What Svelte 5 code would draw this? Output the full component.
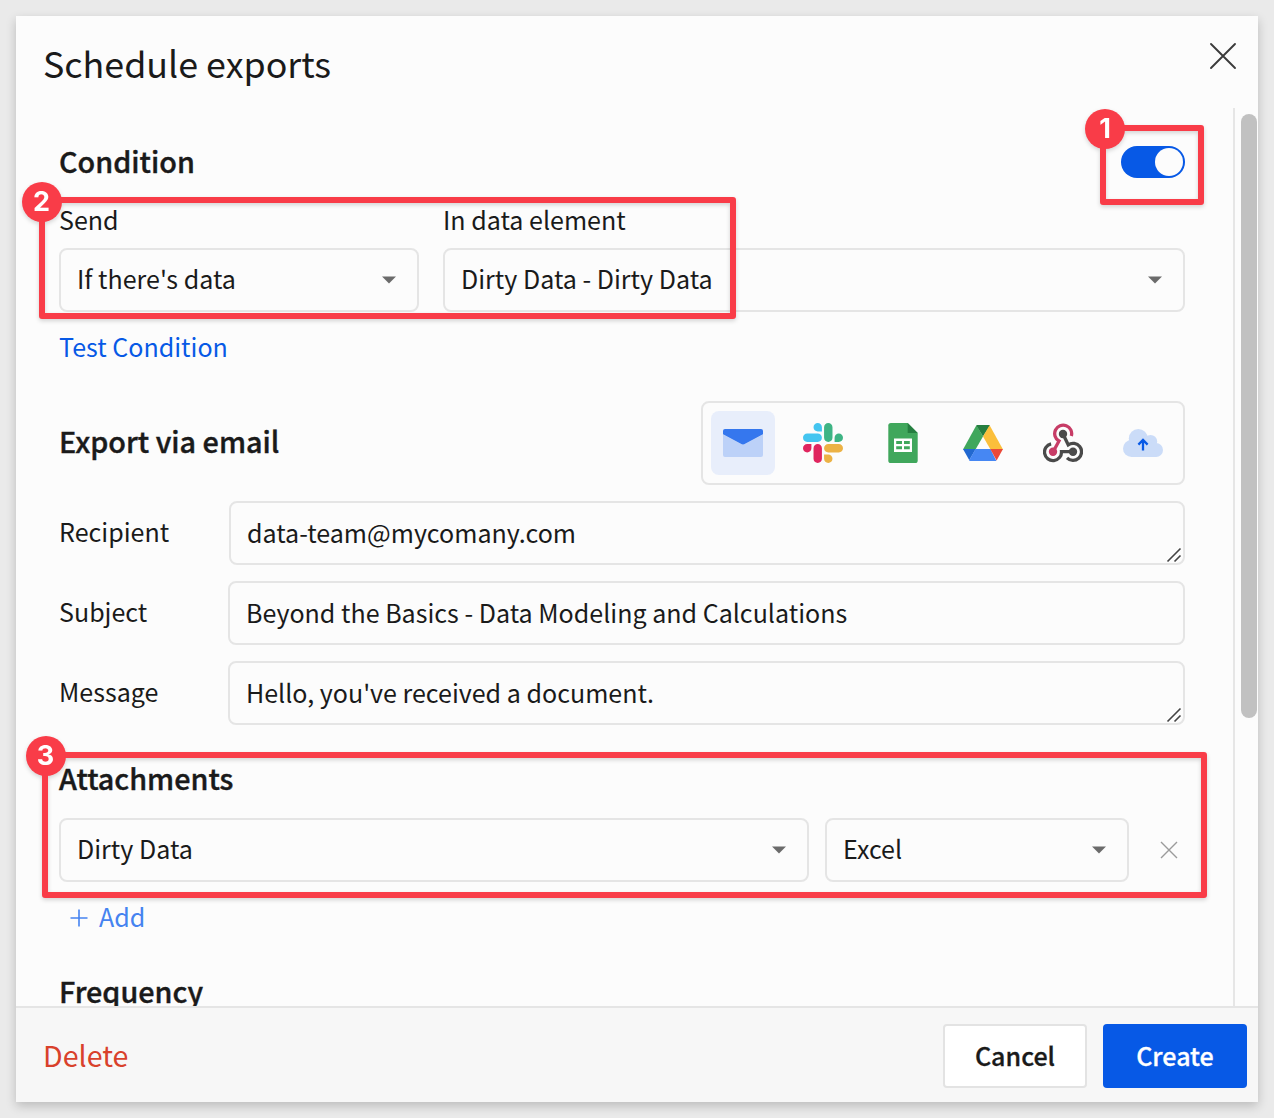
<script>
  let enabled = $state(true);
  let channel = $state('email');

  const channels = ['email', 'slack', 'sheets', 'drive', 'webhook', 'cloud'];
  const fields = [
    { label: 'Recipient', value: 'data-team@mycomany.com', resizable: true },
    { label: 'Subject', value: 'Beyond the Basics - Data Modeling and Calculations', resizable: false },
    { label: 'Message', value: "Hello, you've received a document.", resizable: true }
  ];
</script>

{#snippet select(text, cls)}
  <button class="select {cls}">
    <span>{text}</span>
    <svg class="caret" width="14" height="8" viewBox="0 0 14 8"><path d="M0 .4h14L7 7.6z" fill="#6b6b6b" /></svg>
  </button>
{/snippet}

{#snippet icon(name)}
  <svg width="40" height="40" viewBox="0 0 40 40">
    {#if name === 'email'}
      <path d="M0 11.4 20 22l20-10.6V32a2 2 0 0 1-2 2H2a2 2 0 0 1-2-2z" fill="#bcd1f8" />
      <path d="M2 6h36a2 2 0 0 1 2 2v3.3L21.2 21.2a2.6 2.6 0 0 1-2.4 0L0 11.3V8a2 2 0 0 1 2-2z" fill="#3577ee" />
    {:else if name === 'slack'}
      <g transform="scale(.32573)">
        <path fill="#e0265f" d="M25.8 77.6c0 7.1-5.8 12.9-12.9 12.9S0 84.7 0 77.6s5.8-12.9 12.9-12.9h12.9v12.9zm6.5 0c0-7.1 5.8-12.9 12.9-12.9s12.9 5.8 12.9 12.9v32.3c0 7.1-5.8 12.9-12.9 12.9s-12.9-5.8-12.9-12.9V77.6z" />
        <path fill="#44c5f0" d="M45.2 25.8c-7.1 0-12.9-5.8-12.9-12.9S38.1 0 45.2 0s12.9 5.8 12.9 12.9v12.9H45.2zm0 6.5c7.1 0 12.9 5.8 12.9 12.9s-5.8 12.9-12.9 12.9H12.9C5.8 58.1 0 52.3 0 45.2s5.8-12.9 12.9-12.9h32.3z" />
        <path fill="#3eb484" d="M97 45.2c0-7.1 5.8-12.9 12.9-12.9s12.9 5.8 12.9 12.9-5.8 12.9-12.9 12.9H97V45.2zm-6.5 0c0 7.1-5.8 12.9-12.9 12.9s-12.9-5.8-12.9-12.9V12.9C64.7 5.8 70.5 0 77.6 0s12.9 5.8 12.9 12.9v32.3z" />
        <path fill="#ecb245" d="M77.6 97c7.1 0 12.9 5.8 12.9 12.9s-5.8 12.9-12.9 12.9-12.9-5.8-12.9-12.9V97h12.9zm0-6.5c-7.1 0-12.9-5.8-12.9-12.9s5.8-12.9 12.9-12.9h32.3c7.1 0 12.9 5.8 12.9 12.9s-5.8 12.9-12.9 12.9H77.6z" />
      </g>
    {:else if name === 'sheets'}
      <path d="M7.9 0h16.8l10 10v27.4a2.6 2.6 0 0 1-2.6 2.6H7.9a2.6 2.6 0 0 1-2.6-2.6V2.6A2.6 2.6 0 0 1 7.9 0z" fill="#40a75c" />
      <path d="M24.7 0l10 10h-10z" fill="#257e40" />
      <path fill-rule="evenodd" d="M11 15.5h18V29H11zm2.2 2.5v3h5.8v-3zm7.8 0v3h5.8v-3zm-7.8 5.3v3H19v-3zm7.8 0v3h5.8v-3z" fill="#fff" />
    {:else if name === 'drive'}
      <path d="M13.4 2.2 20 13.5 12.5 26.4H0z" fill="#40a75c" />
      <path d="M14 2h12l1 .4L20 13.5 13.3 2.4z" fill="#257e40" />
      <path d="M26.6 2.2 40 26.4H27.5L20 13.5z" fill="#fbbf3b" />
      <path d="M0 26.1h12.7L6.3 37.3z" fill="#2168d0" />
      <path d="M12.5 26.1h15L33.4 38H6.6l-.4-.7z" fill="#4687f3" />
      <path d="M27.3 26.1H40l-6.4 11.5z" fill="#ea4939" />
    {:else if name === 'webhook'}
      <g fill="none" stroke-width="3.3">
        <path d="M28.3 13.1A8.5 8.5 0 1 0 16 18L10 29" stroke="#c73c66" />
        <path d="M8.1 20.8A8.5 8.5 0 1 0 18.5 28.6H30" stroke="#4a4a4a" />
        <path d="M24 34.8A8.5 8.5 0 1 0 25.2 21.8L20 11" stroke="#4a4a4a" />
      </g>
      <circle cx="20" cy="11" r="4.2" fill="#4a4a4a" />
      <circle cx="10" cy="28.8" r="4.2" fill="#c73c66" />
      <circle cx="30" cy="28.8" r="4.2" fill="#4a4a4a" />
    {:else}
      <g fill="#cbdcf8">
        <circle cx="8.5" cy="25.5" r="8.5" />
        <circle cx="15.3" cy="15.5" r="9.5" />
        <circle cx="27.5" cy="18.6" r="6.7" />
        <circle cx="33" cy="27" r="7" />
        <path d="M8.5 18h20l5 16h-25z" />
      </g>
      <path d="M20 27.5V17.3M15.4 21.6 20 17l4.6 4.6" fill="none" stroke="#0759e6" stroke-width="2.3" />
    {/if}
  </svg>
{/snippet}

<div class="page">
  <section class="dialog">
    <header>
      <h1>Schedule exports</h1>
      <button class="close" aria-label="Close">
        <svg width="28" height="28" viewBox="0 0 28 28"><path d="M2 2l24 24M26 2 2 26" stroke="#3b3b3b" stroke-width="1.9" stroke-linecap="round" /></svg>
      </button>
    </header>

    <div class="body">
      <div class="content">
        <div class="row condition">
          <h2>Condition</h2>
          <button class="toggle" class:on={enabled} aria-label="Condition" onclick={() => (enabled = !enabled)}><i></i></button>
        </div>

        <div class="pair">
          <div class="group send">
            <span class="label">Send</span>
            {@render select("If there's data", 'when')}
          </div>
          <div class="group element">
            <span class="label">In data element</span>
            {@render select('Dirty Data - Dirty Data', 'source')}
          </div>
        </div>
        <a class="test" href="#test">Test Condition</a>

        <div class="row export">
          <h2>Export via email</h2>
          <div class="channels">
            {#each channels as name}
              <button class:active={channel === name} aria-label={name} onclick={() => (channel = name)}>{@render icon(name)}</button>
            {/each}
          </div>
        </div>

        <div class="fields">
          {#each fields as field}
            <div class="field">
              <span>{field.label}</span>
              <div class="input">
                {field.value}
                {#if field.resizable}
                  <svg class="grip" width="16" height="16" viewBox="0 0 16 16"><path d="M1.5 14.5 14.5 1.5M8.5 14.5l6-6" stroke="#444" stroke-width="1.6" /></svg>
                {/if}
              </div>
            </div>
          {/each}
        </div>

        <h2 class="attachments">Attachments</h2>
        <div class="files">
          {@render select('Dirty Data', 'file')}
          {@render select('Excel', 'format')}
          <button class="remove" aria-label="Remove">
            <svg width="18" height="18" viewBox="0 0 18 18"><path d="M1 1l16 16M17 1 1 17" stroke="#9b9b9b" stroke-width="1.4" /></svg>
          </button>
        </div>
        <button class="add">
          <svg width="18" height="18" viewBox="0 0 18 18"><path d="M9 0.5v17M.5 9h17" stroke="#4583f0" stroke-width="1.6" /></svg>
          <span>Add</span>
        </button>
        <h2 class="frequency">Frequency</h2>
      </div>
      <div class="track"><div class="thumb"></div></div>
    </div>

    <footer>
      <button class="delete">Delete</button>
      <button class="btn cancel">Cancel</button>
      <button class="btn create">Create</button>
    </footer>
  </section>

  <div class="mark one"><b>1</b></div>
  <div class="mark two"><b>2</b></div>
  <div class="mark three"><b>3</b></div>
</div>

<style>
  :global(body) { background: #eaeaea; }
  .page {
    position: relative;
    box-sizing: border-box;
    width: 1274px;
    height: 1118px;
    padding: 16px;
    background: #eaeaea;
    overflow: hidden;
    color: #1a1a1a;
    font: 25.05px/36px 'Noto Sans CJK SC', 'Noto Sans', sans-serif;
  }
  .page :global(*) { box-sizing: border-box; }
  button { font: inherit; color: inherit; border: 0; padding: 0; background: none; }
  svg { display: block; flex: none; }
  h1, h2 { margin: 0; white-space: nowrap; }
  h2 { height: 40px; font-size: 28.75px; line-height: 36px; font-weight: 500; -webkit-text-stroke: .4px currentColor; }
  .dialog {
    display: flex;
    flex-direction: column;
    width: 1242px;
    height: 1086px;
    background: #fcfcfc;
    box-shadow: 0 4px 10px rgba(0, 0, 0, .2);
  }
  header { display: flex; justify-content: space-between; height: 92px; padding: 26px 21px 0 27px; }
  h1 { height: 46px; font-size: 35.8px; line-height: 41px; font-weight: 400; }
  .close { width: 28px; height: 28px; }
  .body { display: flex; height: 898px; overflow: hidden; }
  .content { width: 1217px; padding: 38px 48px 0 43px; }
  .track { width: 25px; padding: 6px 1px 0 6px; border-left: 2px solid #e6e6e6; }
  .thumb { width: 16px; height: 604px; border-radius: 8px; background: #c1c1c1; }
  .row { display: flex; align-items: center; justify-content: space-between; }
  .condition { height: 32px; }
  .condition h2 { line-height: 38px; }
  .toggle { width: 64px; height: 32px; padding: 2px; border-radius: 16px; background: #b5b5b5; display: flex; }
  .toggle.on { background: #0759e6; justify-content: flex-end; }
  .toggle i { width: 28px; height: 28px; border-radius: 50%; background: #fcfcfc; }
  .pair { display: flex; gap: 24px; margin-top: 23px; }
  .group { display: flex; flex-direction: column; gap: 11px; }
  .send { width: 360px; }
  .element { flex: 1; }
  .select {
    display: flex;
    align-items: center;
    justify-content: space-between;
    height: 64px;
    padding: 0 21px 0 16px;
    border: 2px solid #e5e5e5;
    border-radius: 8px;
    white-space: nowrap;
  }
  .select span, .add span { padding-bottom: 4px; }
  .test { display: block; height: 38px; margin-top: 16px; color: #0759e6; text-decoration: none; }
  .export { height: 84px; margin-top: 35px; }
  .channels { display: flex; gap: 16px; width: 484px; height: 84px; padding: 8px; border: 2px solid #e5e5e5; border-radius: 8px; }
  .channels button { display: grid; place-items: center; width: 64px; height: 64px; border-radius: 8px; }
  .channels .active { background: #e8eefb; }
  .fields { display: grid; gap: 16px; margin-top: 16px; }
  .field { display: flex; align-items: center; height: 64px; }
  .field > span { width: 169px; padding-bottom: 4px; }
  .field:first-child > span { width: 170px; }
  .input { position: relative; flex: 1; height: 64px; padding: 11px 16px; border: 2px solid #e5e5e5; border-radius: 8px; white-space: nowrap; }
  .grip { position: absolute; right: 1px; bottom: 0; }
  .attachments { margin-top: 35px; }
  .files { display: flex; align-items: center; gap: 16px; margin-top: 18px; }
  :global(.file) { width: 750px; }
  :global(.format) { width: 304px; }
  .remove { margin-left: 15px; }
  .add { display: flex; align-items: center; gap: 11px; height: 36px; margin: 18px 0 0 11px; color: #4583f0; }
  .frequency { margin-top: 37px; }
  footer { display: flex; align-items: center; gap: 16px; height: 96px; padding: 2px 11px 0 27px; border-top: 2px solid #e5e5e5; background: #f7f7f7; }
  .delete { margin-right: auto; padding-bottom: 2px; color: #d9412b; font-size: 28.6px; }
  .btn { width: 144px; height: 64px; padding-bottom: 2px; border-radius: 4px; font-weight: 500; -webkit-text-stroke: .3px currentColor; }
  .cancel { border: 2px solid #e3e3e3; background: #fff; }
  .create { background: #0759e6; color: #fff; }

  /* Numbered callouts laid over the dialog */
  .mark { position: absolute; border: 6px solid #f93c48; border-radius: 3px; filter: drop-shadow(0 2px 2px rgba(0, 0, 0, .16)); }
  .mark b {
    position: absolute;
    width: 40px;
    height: 40px;
    border-radius: 50%;
    background: #f93c48;
    color: #fff;
    font: 700 27px/40px Inter, sans-serif;
    text-align: center;
  }
  .one { left: 1100px; top: 125px; width: 104px; height: 80px; }
  .one b { left: -21px; top: -22px; }
  .two { left: 38.5px; top: 197.4px; width: 697px; height: 122px; }
  .two b { left: -23px; top: -21.5px; }
  .three { left: 41.5px; top: 752px; width: 1165.5px; height: 146px; }
  .three b { left: -22px; top: -22.5px; }
</style>
